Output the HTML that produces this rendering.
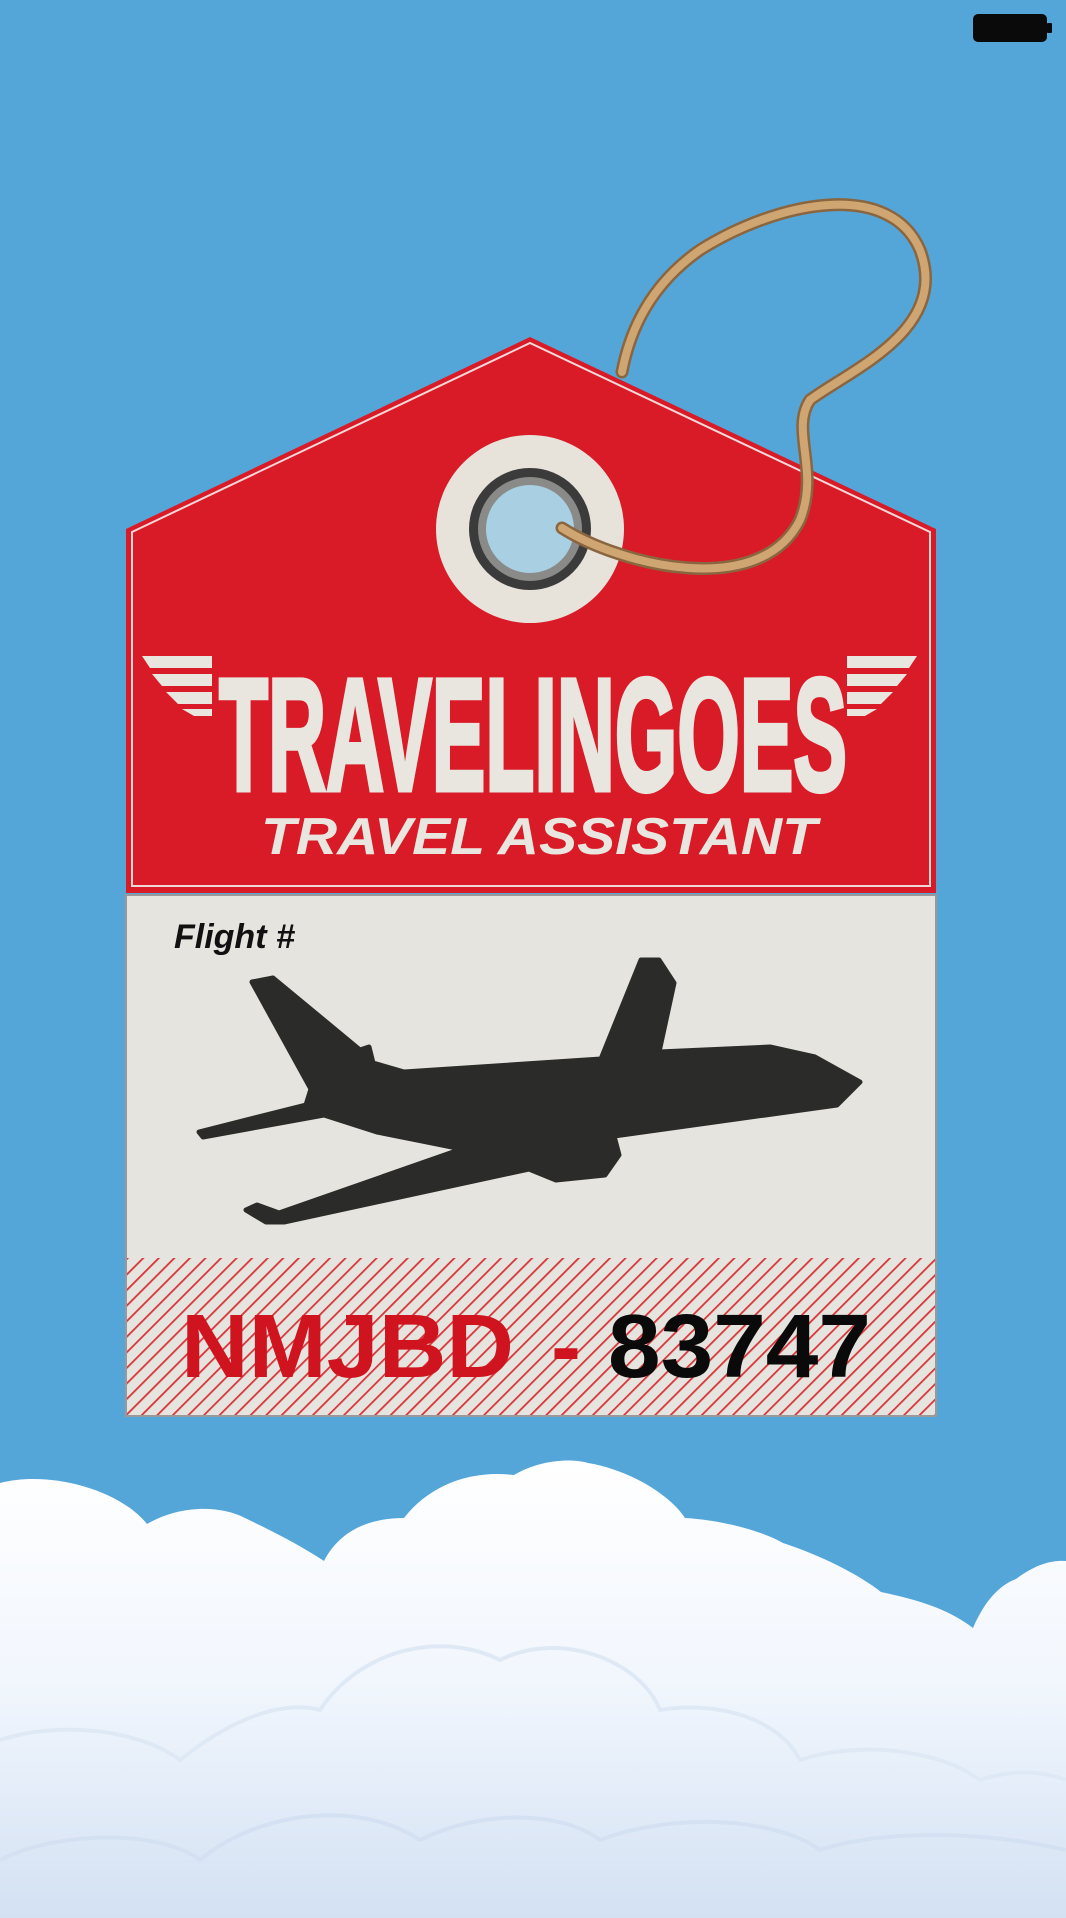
<!DOCTYPE html>
<html><head><meta charset="utf-8"><style>
html,body{margin:0;padding:0;background:#55a6d8;}
svg{display:block}
</style></head><body>
<svg width="1066" height="1918" viewBox="0 0 1066 1918" xmlns="http://www.w3.org/2000/svg">
<defs>
<linearGradient id="cl" x1="0" y1="0" x2="0" y2="1">
<stop offset="0" stop-color="#ffffff"/><stop offset="0.5" stop-color="#f1f6fd"/><stop offset="1" stop-color="#d3e1f3"/>
</linearGradient>
<pattern id="st" width="11" height="11" patternUnits="userSpaceOnUse" patternTransform="rotate(45)">
<rect width="11" height="11" fill="#e6e4de"/><rect x="0" width="1.8" height="11" fill="#d8353a"/>
</pattern>
</defs>
<rect width="1066" height="1918" fill="#55a6d8"/>
<rect x="973" y="14" width="74" height="28" rx="5" fill="#0a0a0a"/>
<rect x="1047" y="23" width="5" height="10" rx="1" fill="#0a0a0a"/>
<path d="M126,529 L530,337 L936,529 L936,893 L126,893 Z" fill="#d91b27"/>
<path d="M132,532 L530,343 L930,532 L930,886 L132,886 Z" fill="none" stroke="#f1d8d8" stroke-width="2"/>
<rect x="126" y="895" width="810" height="521" fill="#e6e4de" stroke="#999" stroke-width="2"/>
<rect x="127" y="1258" width="808" height="157" fill="url(#st)"/>
<circle cx="530" cy="529" r="94" fill="#e7e3da"/>
<circle cx="530" cy="529" r="61" fill="#3b3b3b"/>
<circle cx="530" cy="529" r="52" fill="#8a8a88"/>
<circle cx="530" cy="529" r="44" fill="#a8d0e2"/>
<path d="M562,528 C620,565 760,600 800,520 C820,470 790,430 810,400 C850,370 950,330 920,250 C890,180 780,200 700,250 C650,285 630,330 622,372" fill="none" stroke="#8a6640" stroke-width="13" stroke-linecap="round"/>
<path d="M562,528 C620,565 760,600 800,520 C820,470 790,430 810,400 C850,370 950,330 920,250 C890,180 780,200 700,250 C650,285 630,330 622,372" fill="none" stroke="#cfa672" stroke-width="8" stroke-linecap="round"/>
<g fill="#e9e6e0">
<path d="M142,656 L212,656 L212,668 L150,668 Z"/><path d="M152,674 L212,674 L212,686 L162,686 Z"/><path d="M166,692 L212,692 L212,704 L178,704 Z"/><path d="M182,709 L212,709 L212,716 L194,716 Z"/>
<path d="M917,656 L847,656 L847,668 L909,668 Z"/><path d="M907,674 L847,674 L847,686 L897,686 Z"/><path d="M893,692 L847,692 L847,704 L881,704 Z"/><path d="M877,709 L847,709 L847,716 L865,716 Z"/>
</g>
<text x="219" y="790" font-family="Liberation Sans, sans-serif" font-weight="bold" font-size="160" fill="#e9e6e0" stroke="#e9e6e0" stroke-width="5" textLength="628" lengthAdjust="spacingAndGlyphs">TRAVELINGOES</text>
<text x="261" y="854" font-family="Liberation Sans, sans-serif" font-weight="bold" font-style="italic" font-size="52" fill="#e9e6e0" textLength="556" lengthAdjust="spacingAndGlyphs">TRAVEL ASSISTANT</text>
<text x="174" y="948" font-family="Liberation Sans, sans-serif" font-weight="bold" font-style="italic" font-size="34" fill="#111">Flight #</text>
<path d="M252,982 L273,978 L360,1050 L369,1047 L373,1063 L404,1072 L601,1059 L641,960 L659,960 L674,983 L659,1052 L770,1047 L815,1057 L860,1082 L837,1105 L614,1136 L619,1155 L605,1175 L556,1180 L529,1169 L284,1222 L266,1222 L246,1210 L257,1205 L279,1213 L462,1149 L377,1132 L324,1115 L203,1137 L199,1132 L306,1105 L311,1089 Z" fill="#2b2b2a" stroke="#2b2b2a" stroke-width="5" stroke-linejoin="round"/>
<text x="181" y="1377" font-family="Liberation Sans, sans-serif" font-weight="bold" font-size="90" fill="#d0141f" textLength="333" lengthAdjust="spacingAndGlyphs">NMJBD</text>
<text x="551" y="1377" font-family="Liberation Sans, sans-serif" font-weight="bold" font-size="90" fill="#d0141f">-</text>
<text x="608" y="1377" font-family="Liberation Sans, sans-serif" font-weight="bold" font-size="90" fill="#0a0a0a" textLength="263" lengthAdjust="spacingAndGlyphs">83747</text>
<path d="M0,1483 C50,1470 120,1490 147,1524 C180,1505 220,1505 245,1518 C270,1530 300,1545 324,1561 C340,1530 370,1518 404,1518 C430,1485 470,1470 514,1475 C540,1460 570,1458 588,1463 C630,1470 670,1495 685,1518 C720,1520 760,1530 783,1543 C820,1555 860,1575 881,1592 C920,1600 950,1610 973,1628 C985,1600 1000,1585 1016,1579 C1035,1565 1050,1560 1066,1561 L1066,1918 L0,1918 Z" fill="url(#cl)"/>
<path d="M0,1740 C60,1720 140,1730 180,1760 C230,1720 280,1700 320,1710 C360,1650 440,1630 500,1660 C560,1630 640,1660 660,1710 C720,1700 780,1720 800,1760 C860,1740 940,1750 980,1780 C1010,1770 1040,1770 1066,1780" fill="none" stroke="#dfe9f6" stroke-width="4"/>
<path d="M0,1860 C60,1830 160,1830 200,1860 C260,1810 360,1800 420,1840 C480,1810 560,1810 600,1840 C680,1810 780,1820 820,1850 C880,1830 980,1830 1066,1850" fill="none" stroke="#d4e1f2" stroke-width="4"/>
</svg>
</body></html>
